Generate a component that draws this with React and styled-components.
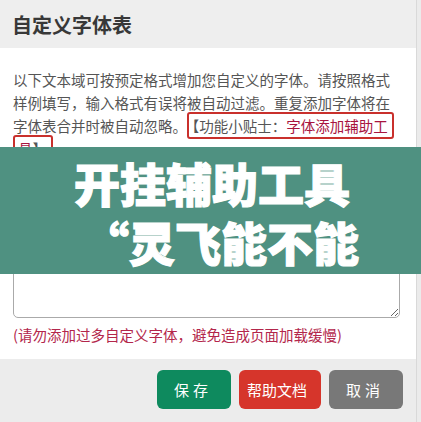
import React from "react";
import styled, { createGlobalStyle } from "styled-components";

const GlobalStyle = createGlobalStyle`
  html, body {
    margin: 0;
    padding: 0;
    background: #ebebeb;
  }
  * {
    box-sizing: border-box;
  }
`;

const Page = styled.div`
  position: relative;
  width: 421px;
  height: 422px;
  overflow: hidden;
  font-family: "Noto Sans CJK SC", "Noto Sans", sans-serif;
`;

const Dialog = styled.div`
  width: 417px;
  height: 100%;
  display: flex;
  flex-direction: column;
  border-right: 1px solid #d9d9d9;
  background: #ececec;
`;

const Header = styled.div`
  height: 48px;
  padding: 0 12px;
  display: flex;
  align-items: center;
  background: #eeeeee;
`;

const Title = styled.h2`
  margin: 0;
  font-size: 20px;
  font-weight: 700;
  color: #383838;
`;

const Body = styled.div`
  background: #fff;
  padding: 20px 16px 13px 13px;
`;

const Intro = styled.p`
  margin: 0 -3px 0 0;
  font-size: 14.5px;
  line-height: 23px;
  color: #555;
`;

const Tip = styled.span`
  border: 2px solid #c9302c;
  border-radius: 3px;
  padding: 1px 4px 1px 3px;
  -webkit-box-decoration-break: clone;
  box-decoration-break: clone;
  color: #555;
`;

const Highlight = styled.span`
  color: ${(props) => props.color || "#a8153f"};
`;

const Editor = styled.textarea`
  display: block;
  width: 100%;
  height: 149px;
  margin-top: 9px;
  border: 1px solid #aaa;
  border-radius: 5px;
  background: #fff;
  resize: vertical;
  outline: none;
`;

const Note = styled.div`
  margin-top: 5px;
  font-size: 14.5px;
  line-height: 23px;
  color: #b3264b;
`;

const Footer = styled.div`
  flex: 1;
  display: flex;
  justify-content: flex-end;
  align-items: flex-start;
  gap: 8px;
  padding: 11px 13px;
  background: #ececec;
`;

const Button = styled.button`
  width: ${(props) => props.w || 74}px;
  height: 39px;
  border: none;
  border-radius: 6px;
  background: ${(props) => props.bg};
  color: #fff;
  font-family: inherit;
  font-size: 15px;
  letter-spacing: ${(props) => (props.spaced ? "4px" : "0")};
  padding-left: ${(props) => (props.spaced ? "4px" : "0")};
  cursor: pointer;
`;

const Banner = styled.div`
  position: absolute;
  top: 147px;
  left: 0;
  right: 0;
  height: 127px;
  background: #4f9181;
  padding-top: 6px;
`;

const BannerLine = styled.div`
  padding-left: ${(props) => props.indent}px;
  font-size: 46px;
  line-height: 59px;
  font-weight: 900;
  color: #fff;
  -webkit-text-stroke: 1.2px #fff;
  white-space: nowrap;
`;

export default function App() {
  return (
    <>
      <GlobalStyle />
      <Page>
        <Dialog>
          <Header>
            <Title>自定义字体表</Title>
          </Header>
          <Body>
            <Intro>
              以下文本域可按预定格式增加您自定义的字体。请按照格式样例填写，输入格式有误将被自动过滤。重复添加字体将在字体表合并时被自动忽略。
              <Tip>
                【功能小贴士：<Highlight>字体添加辅助工具</Highlight>】
              </Tip>
            </Intro>
            <Editor />
            <Note>(请勿添加过多自定义字体，避免造成页面加载缓慢)</Note>
          </Body>
          <Footer>
            <Button bg="#0e8a5e" spaced>
              保存
            </Button>
            <Button bg="#d6352b" w={82}>
              帮助文档
            </Button>
            <Button bg="#787878" spaced>
              取消
            </Button>
          </Footer>
        </Dialog>
        <Banner>
          <BannerLine indent={74}>开挂辅助工具</BannerLine>
          <BannerLine indent={83}>“灵飞能不能</BannerLine>
        </Banner>
      </Page>
    </>
  );
}
